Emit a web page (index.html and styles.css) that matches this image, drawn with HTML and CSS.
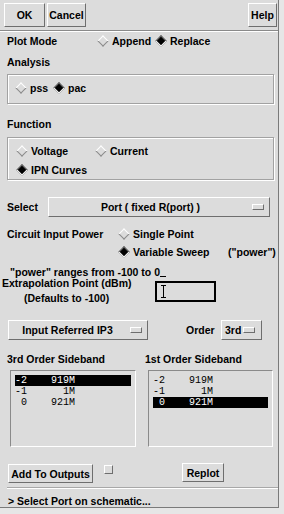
FILE: index.html
```html
<!DOCTYPE html>
<html>
<head>
<meta charset="utf-8">
<link rel="stylesheet" href="styles.css">
</head>
<body>
<div class="window">
  <div class="toolbar">
    <div class="btn ok">OK</div>
    <div class="btn cancel">Cancel</div>
    <div class="btn help">Help</div>
  </div>
  <div class="content">
    <div class="row r-plot">
      <span class="lbl w90">Plot Mode</span>
      <span class="radio w58"><i class="dia"></i>Append</span>
      <span class="radio"><i class="dia on"></i>Replace</span>
    </div>
    <div class="row r-label">Analysis</div>
    <div class="group g-analysis">
      <span class="radio w38"><i class="dia"></i>pss</span>
      <span class="radio"><i class="dia on"></i>pac</span>
    </div>
    <div class="row r-label r-func">Function</div>
    <div class="group g-func">
      <div class="grow">
        <span class="radio w79"><i class="dia"></i>Voltage</span>
        <span class="radio"><i class="dia"></i>Current</span>
      </div>
      <div class="grow">
        <span class="radio"><i class="dia on"></i>IPN Curves</span>
      </div>
    </div>
    <div class="row r-select">
      <span class="lbl w41">Select</span>
      <div class="option opt-port"><span class="opt-text">Port ( fixed R(port) )</span><i class="ind"></i></div>
    </div>
    <div class="row r-cip">
      <span class="lbl w111">Circuit Input Power</span>
      <span class="radio"><i class="dia"></i>Single Point</span>
    </div>
    <div class="row r-vs">
      <span class="w111"></span>
      <span class="radio w110"><i class="dia on"></i>Variable Sweep</span>
      <span>("power")</span>
    </div>
    <div class="line l-range">"power" ranges from -100 to 0<span class="uline"></span></div>
    <div class="row r-extrap">
      <div class="extrap-col">
        <div class="line">Extrapolation Point (dBm)</div>
        <div class="line l-def">(Defaults to -100)</div>
      </div>
      <div class="tfield">
        <svg class="caret" width="7" height="13" viewBox="0 0 7 13"><path d="M1 0.5h5M3.5 0.5v12M1 12.5h5" stroke="#000" stroke-width="1" fill="none"/></svg>
      </div>
    </div>
    <div class="row r-ip3">
      <div class="option opt-ip3"><span class="opt-text">Input Referred IP3</span><i class="ind"></i></div>
      <span class="lbl order">Order</span>
      <div class="option opt-order"><span class="opt-text">3rd</span><i class="ind"></i></div>
    </div>
    <div class="lists">
      <div class="lcol lcol-left">
        <div class="sb-label">3rd Order Sideband</div>
        <div class="list list-left">
          <div class="li sel">-2    919M</div>
          <div class="li">-1      1M</div>
          <div class="li"> 0    921M</div>
        </div>
      </div>
      <div class="lcol">
        <div class="sb-label">1st Order Sideband</div>
        <div class="list list-right">
          <div class="li">-2    919M</div>
          <div class="li">-1      1M</div>
          <div class="li sel"> 0    921M</div>
        </div>
      </div>
    </div>
    <div class="row r-actions">
      <div class="btn add">Add To Outputs</div>
      <i class="check"></i>
      <div class="btn replot">Replot</div>
    </div>
  </div>
  <div class="status">&gt; Select Port on schematic...</div>
</div>
</body>
</html>
```

FILE: styles.css
```css
html, body {
  margin: 0;
  padding: 0;
}
body {
  width: 284px;
  height: 514px;
  overflow: hidden;
  background: #e6e6e6;
  font: bold 10.5px "Liberation Sans", Arial, sans-serif;
  color: #000;
}
.window {
  width: 278px;
  height: 507px;
  background: #dcdcdc;
  border-right: 1px solid #7a7a7a;
  border-bottom: 1px solid #7a7a7a;
  display: flex;
  flex-direction: column;
}
.toolbar {
  height: 31px;
  box-sizing: border-box;
  border-bottom: 1px solid #8a8a8a;
  box-shadow: 0 1px 0 #fff;
  display: flex;
  align-items: flex-start;
  padding: 3px 1px 0 4px;
  flex: none;
}
.btn {
  height: 24px;
  box-sizing: border-box;
  border: 1px solid;
  border-color: #fff #6e6e6e #6e6e6e #fff;
  display: flex;
  align-items: center;
  justify-content: center;
  background: #dcdcdc;
}
.ok { width: 41px; }
.cancel { width: 39px; margin-left: 2px; }
.help { width: 29px; margin-left: auto; }

.content {
  padding: 0 4px 0 7px;
  display: flex;
  flex-direction: column;
  flex: none;
}
.row {
  display: flex;
  align-items: center;
}
.lbl { flex: none; }
.w90 { width: 90px; flex: none; }
.w58 { width: 58px; flex: none; }
.w38 { width: 38px; flex: none; }
.w79 { width: 79px; flex: none; }
.w41 { width: 41px; flex: none; }
.w111 { width: 111px; flex: none; }
.w110 { width: 110px; flex: none; }

.radio {
  display: inline-flex;
  align-items: center;
  white-space: nowrap;
}
.dia {
  width: 12px;
  height: 12px;
  margin-right: 3px;
  position: relative;
  flex: none;
  display: inline-block;
}
.dia::before {
  content: "";
  position: absolute;
  left: 2px;
  top: 2px;
  width: 6px;
  height: 6px;
  border: 1px solid;
  border-color: #fff #8a8a8a #8a8a8a #fff;
  background: #dcdcdc;
  transform: rotate(45deg);
}
.dia.on::before {
  background: #000;
  border-color: #6a6a6a #fff #fff #6a6a6a;
}

.r-plot { height: 20px; }
.r-label { height: 20px; margin-top: 1px; }
.group {
  border: 1px solid #a2a2a2;
  box-shadow: inset 1px 1px 0 #fff, 1px 1px 0 #fff;
  box-sizing: border-box;
}
.g-analysis {
  height: 30px;
  margin-top: 2px;
  display: flex;
  align-items: center;
  padding: 0 0 3px 7px;
}
.r-func { margin-top: 10px; }
.g-func {
  height: 43px;
  margin-top: 3px;
  padding: 3px 0 0 8px;
}
.grow {
  height: 19px;
  display: flex;
  align-items: center;
}
.r-select { height: 20px; margin-top: 17px; }
.option {
  height: 20px;
  box-sizing: border-box;
  border: 1px solid;
  border-color: #fff #6e6e6e #6e6e6e #fff;
  display: flex;
  align-items: center;
}
.opt-text {
  flex: 1;
  text-align: center;
  white-space: nowrap;
}
.ind {
  width: 10px;
  height: 4px;
  border: 1px solid;
  border-color: #fff #6e6e6e #6e6e6e #fff;
  flex: none;
  margin-right: 5px;
}
.opt-port { width: 222px; }
.r-cip { height: 18px; margin-top: 8px; }
.r-vs { height: 18px; }
.line {
  height: 10px;
  line-height: 10px;
  white-space: nowrap;
}
.l-range { margin-top: 6px; padding-left: 3px; }
.uline {
  display: inline-block;
  width: 6px;
  height: 1px;
  background: #000;
  vertical-align: -1px;
}
.r-extrap { align-items: flex-start; margin-left: -5px; margin-top: 1px; }
.extrap-col { width: 153px; flex: none; }
.l-def { margin-top: 5px; padding-left: 22px; }
.tfield {
  width: 61px;
  height: 21px;
  box-sizing: border-box;
  border: 2px solid #000;
  margin-top: 3px;
  padding: 2px 0 0 3px;
  background: #dcdcdc;
}
.caret { display: block; }
.r-ip3 { margin-top: 17px; height: 20px; }
.opt-ip3 { width: 140px; margin-left: 1px; }
.opt-ip3 .opt-text { padding-right: 4px; }
.order { margin-left: 38px; width: 35px; }
.opt-order { width: 41px; }
.opt-order .opt-text { text-align: left; padding-left: 3px; }
.opt-order .ind { margin-right: 6px; }

.lists { display: flex; margin-top: 9px; }
.lcol-left { width: 138px; flex: none; }
.sb-label { height: 21px; line-height: 21px; }
.list {
  margin-left: 3px;
  height: 77px;
  box-sizing: border-box;
  border: 1px solid;
  border-color: #8a8a8a #fff #fff #8a8a8a;
  padding: 4px;
  font: 10px "Liberation Mono", "Courier New", monospace;
  color: #000;
}
.list-left { width: 126px; }
.list-right { width: 125px; }
.li {
  height: 11px;
  line-height: 11px;
  white-space: pre;
  color: #000;
}
.li.sel { background: #000; color: #fff; }

.r-actions { margin-top: 17px; align-items: flex-start; }
.add { width: 85px; height: 19px; margin-left: 1px; }
.check {
  width: 9px;
  height: 9px;
  box-sizing: border-box;
  border: 1px solid;
  border-color: #fff #6e6e6e #6e6e6e #fff;
  margin: 1px 0 0 11px;
  flex: none;
}
.replot { width: 42px; height: 19px; margin-left: 69px; margin-top: -1px; }

.status {
  margin: 4px 0 0 7px;
  border-top: 1px solid #a8a8a8;
  box-shadow: inset 0 1px 0 #fff;
  height: 17px;
  padding-top: 3px;
  line-height: 20px;
  padding-left: 1px;
  white-space: nowrap;
}
```
